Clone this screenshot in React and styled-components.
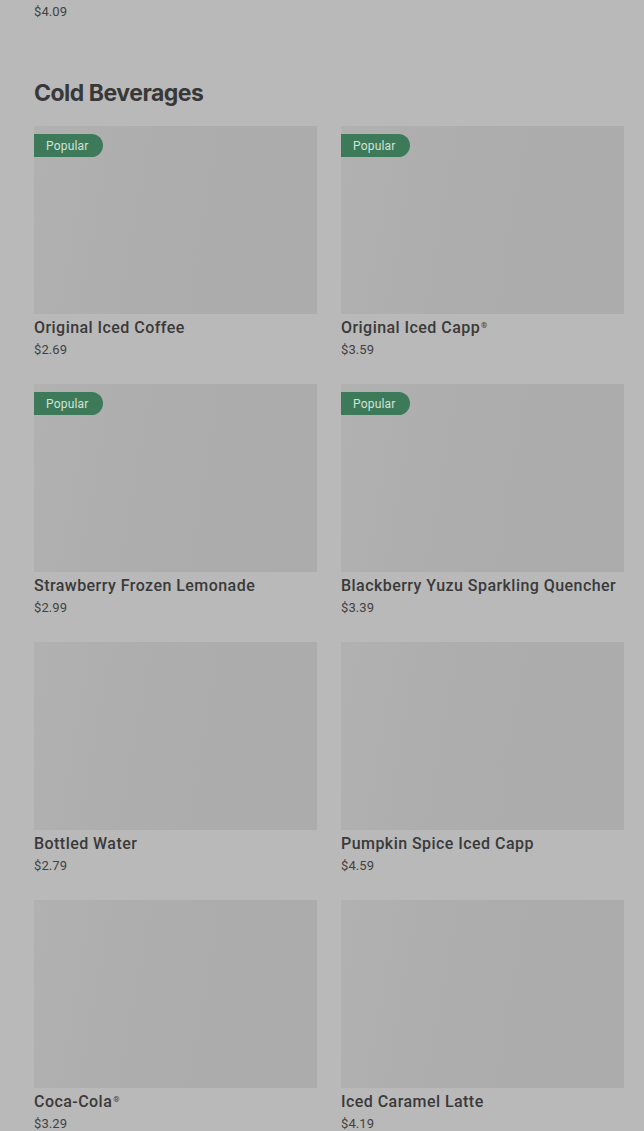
import React from "react";
import styled, { createGlobalStyle } from "styled-components";

const Global = createGlobalStyle`
  html, body { margin: 0; padding: 0; background: #b9b9b9; }
  body { font-family: Roboto, "Liberation Sans", sans-serif; color: #3a3a3a; }
`;

const Page = styled.div`
  padding: 2px 20px 0 34px;
`;

const Price = styled.div`
  font-size: 13px;
  line-height: 20px;
  color: #424242;
  letter-spacing: 0.1px;
`;

const Heading = styled.h2`
  margin: 55px 0 17px;
  font-family: Inter, "Liberation Sans", sans-serif;
  font-weight: 700;
  font-size: 23px;
  line-height: 32px;
  letter-spacing: -0.5px;
  color: #383838;
`;

const Grid = styled.div`
  display: grid;
  grid-template-columns: 1fr 1fr;
  column-gap: 24px;
  row-gap: 24px;
`;

const Card = styled.div`
  display: flex;
  flex-direction: column;
  min-width: 0;
`;

const Thumb = styled.div`
  position: relative;
  height: 188px;
  background: linear-gradient(100deg, #b1b1b1 0%, #adadad 40%, #acacac 100%);
`;

const Badge = styled.span`
  position: absolute;
  top: 8px;
  left: 0;
  height: 23px;
  padding: 0 14px 0 12px;
  display: flex;
  align-items: center;
  background: #3d7a5a;
  color: #d3e2d8;
  font-size: 12px;
  letter-spacing: 0.2px;
  border-radius: 0 12px 12px 0;
`;

const Name = styled.div`
  margin-top: 1px;
  font-size: 16px;
  font-weight: 500;
  line-height: 25px;
  letter-spacing: 0.45px;
  color: #3a3a3a;
  white-space: nowrap;
`;

const Reg = styled.sup`
  font-size: 8px;
  vertical-align: top;
  position: relative;
  top: -2px;
  margin-left: 1px;
`;

const items = [
  { name: "Original Iced Coffee", price: "$2.69", popular: true },
  { name: "Original Iced Capp", reg: true, price: "$3.59", popular: true },
  { name: "Strawberry Frozen Lemonade", price: "$2.99", popular: true },
  { name: "Blackberry Yuzu Sparkling Quencher", price: "$3.39", popular: true },
  { name: "Bottled Water", price: "$2.79" },
  { name: "Pumpkin Spice Iced Capp", price: "$4.59" },
  { name: "Coca-Cola", reg: true, price: "$3.29" },
  { name: "Iced Caramel Latte", price: "$4.19" },
];

export default function App() {
  return (
    <Page>
      <Global />
      <Price>$4.09</Price>
      <Heading>Cold Beverages</Heading>
      <Grid>
        {items.map((it) => (
          <Card key={it.name}>
            <Thumb>{it.popular && <Badge>Popular</Badge>}</Thumb>
            <Name>
              {it.name}
              {it.reg && <Reg>®</Reg>}
            </Name>
            <Price>{it.price}</Price>
          </Card>
        ))}
      </Grid>
    </Page>
  );
}
